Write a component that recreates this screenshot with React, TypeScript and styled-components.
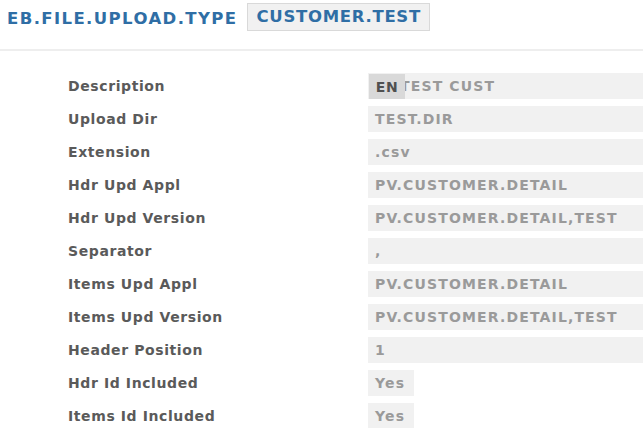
import React from "react";
import styled, { createGlobalStyle } from "styled-components";

const Global = createGlobalStyle`
  html, body { margin: 0; padding: 0; background: #fff; }
  body { font-family: "DejaVu Sans", sans-serif; font-weight: bold; }
`;

const Page = styled.div`
  width: 643px;
  height: 428px;
  overflow: hidden;
`;

const Header = styled.div`
  display: flex;
  align-items: flex-start;
  gap: 10px;
  padding: 3px 0 0 7px;
  border-bottom: 2px solid #eeeeee;
  box-sizing: border-box;
  height: 51px;
`;

const Title = styled.h1`
  margin: 0;
  padding-top: 6px;
  font-size: 16.5px;
  font-weight: bold;
  letter-spacing: 1.4px;
  color: #2f6ea5;
  line-height: 20px;
`;

const Tag = styled.span`
  display: inline-block;
  background: #f1f1f1;
  border: 1px solid #d9d9d9;
  color: #2f6ea5;
  font-size: 16.5px;
  letter-spacing: 0.7px;
  line-height: 26px;
  padding: 0 8px;
`;

const Form = styled.div`
  display: grid;
  grid-template-columns: 300px 1fr;
  row-gap: 7px;
  padding: 22px 0 0 68px;
`;

const Label = styled.div`
  height: 26px;
  display: flex;
  align-items: center;
  color: #5a5a5a;
  font-size: 14px;
  letter-spacing: 0.6px;
`;

const Value = styled.div<{ $short?: boolean; $indent?: number }>`
  position: relative;
  height: 26px;
  display: flex;
  align-items: center;
  justify-self: ${(p) => (p.$short ? "start" : "stretch")};
  background: #f1f1f1;
  color: #9a9a9a;
  font-size: 14px;
  letter-spacing: 1.15px;
  padding: 0 ${(p) => (p.$short ? 9 : 6)}px 0 ${(p) => p.$indent ?? 7}px;
  white-space: nowrap;
  overflow: hidden;
`;

const LangBadge = styled.span`
  position: absolute;
  left: 1px;
  top: 1px;
  width: 36px;
  height: 26px;
  display: flex;
  align-items: center;
  justify-content: center;
  background: #d9d9d9;
  color: #505050;
  font-size: 14px;
  letter-spacing: 0.5px;
`;

const rows: { label: string; value: string; short?: boolean; lang?: boolean }[] = [
  { label: "Description", value: "TEST CUST", lang: true },
  { label: "Upload Dir", value: "TEST.DIR" },
  { label: "Extension", value: ".csv" },
  { label: "Hdr Upd Appl", value: "PV.CUSTOMER.DETAIL" },
  { label: "Hdr Upd Version", value: "PV.CUSTOMER.DETAIL,TEST" },
  { label: "Separator", value: "," },
  { label: "Items Upd Appl", value: "PV.CUSTOMER.DETAIL" },
  { label: "Items Upd Version", value: "PV.CUSTOMER.DETAIL,TEST" },
  { label: "Header Position", value: "1" },
  { label: "Hdr Id Included", value: "Yes", short: true },
  { label: "Items Id Included", value: "Yes", short: true },
];

export default function App() {
  return (
    <Page>
      <Global />
      <Header>
        <Title>EB.FILE.UPLOAD.TYPE</Title>
        <Tag>CUSTOMER.TEST</Tag>
      </Header>
      <Form>
        {rows.map((r) => (
          <React.Fragment key={r.label}>
            <Label>{r.label}</Label>
            <Value $short={r.short} $indent={r.lang ? 32 : 7}>
              {r.lang && <LangBadge>EN</LangBadge>}
              {r.value}
            </Value>
          </React.Fragment>
        ))}
      </Form>
    </Page>
  );
}
